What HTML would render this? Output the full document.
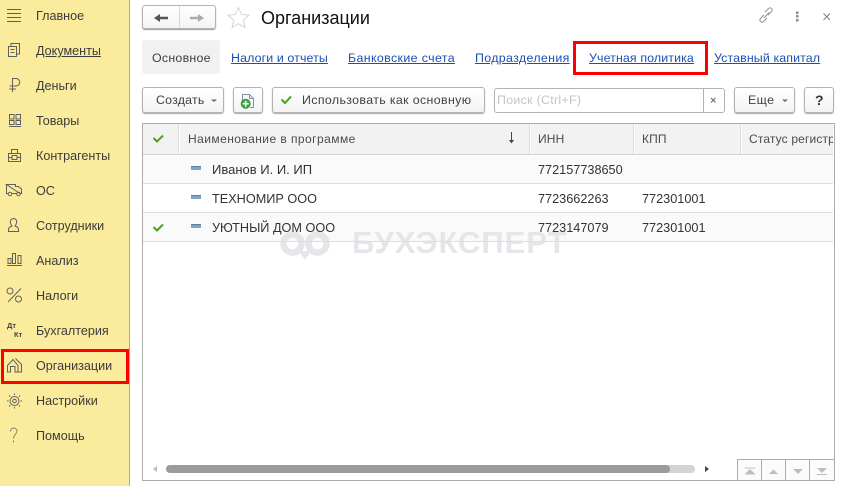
<!DOCTYPE html>
<html><head><meta charset="utf-8">
<style>
html,body{margin:0;padding:0;background:#fff}
#p{position:relative;width:841px;height:486px;overflow:hidden;background:#fff;font-family:"Liberation Sans",sans-serif;font-size:12px;color:#333}
.a{position:absolute}
.t{position:absolute;white-space:nowrap;line-height:16px;height:16px}
#side{left:0;top:0;width:129px;height:486px;background:#fbec9d;border-right:1px solid #b9ac6c}
.s{left:36px;font-size:12.6px;color:#3b3b3b}
.l{top:50px;font-size:12.4px;color:#1c4fb4;text-decoration:underline;letter-spacing:.12px}
.b{position:absolute;box-sizing:border-box;border:1px solid #b3b3b3;border-radius:3px;background:linear-gradient(#fff,#f4f4f4);box-shadow:0 1px 1px #aaa;height:26px;top:87px}
.bt{top:92px;font-size:12.4px;color:#404040;letter-spacing:.2px}
.h{top:131px;font-size:12px;color:#4a4a4a;letter-spacing:.15px}
.c{font-size:12.7px;color:#333}
.ln{position:absolute;background:#dedede;height:1px;left:143px;width:690px}
.sp{position:absolute;top:124px;width:2px;height:30px;background:#fff;border-left:1px solid #dcdcdc;box-sizing:border-box}
.ic{position:absolute;left:0;top:0}
.red{position:absolute;box-sizing:border-box;border:3px solid #f00}
</style></head><body><div id="p">
<div class="a" id="side"></div>
<svg class="ic" width="130" height="486" fill="none" stroke="#5f5f5f" stroke-width="1">
<path d="M7 9.500H21M7 13.500H21M7 17.500H21M7 21.500H21"/>
<path d="M8.500 46.500V56.500H16.500V46.500ZM11 46V43.500H19.500V54H17M10.500 49.500H14.500M10.500 52.500H14.500"/>
<path d="M12.500 92V78.500H16A3.700 3.700 0 0 1 16 86H9.500M9.500 89H16"/>
<path d="M9.500 114.500H14V119H9.500ZM16 114.500H20.500V119H16ZM9.500 120.500H14V124.500H9.500ZM16 120.500H20.500V124.500H16ZM9 126.500H21"/>
<path d="M8.500 153.500H20.500V161.500H8.500ZM11.500 153.500V149.500H17.500V153.500M8.500 157.500H12M17 157.500H20.500M12 155.500H17V159.500H12Z"/>
<path d="M6.500 185V193.500H8M12 193.500H17M20 193.500H21.500V189L18.500 186.500H15.500V184.500H6.500Z"/>
<circle cx="10" cy="194" r="1.800"/><circle cx="18.500" cy="194" r="1.800"/>
<path d="M8.500 231.500V229C9 227 11 226.500 12 226C10.500 224.500 10 221.500 10.500 220.500C11.500 218 15.500 218 16.500 220.500C17 221.500 16.500 224.500 15 226C16 226.500 18 227 18.500 229V231.500Z"/>
<path d="M8 258.500H11V263.500H8ZM12.500 253.500H15.500V263.500H12.500ZM18 255.500H21V263.500H18ZM7 265.500H22"/>
<path d="M8 302L21 288.500"/><circle cx="10" cy="291" r="3"/><circle cx="18.500" cy="299" r="3"/>
<path d="M7.500 372V365.500L13 359.500L18 365.500V372H15V366.500H10.500V372ZM15.500 358.500L21.500 364.500V372H18.500"/>
<circle cx="14.500" cy="401" r="4.500"/><circle cx="14.500" cy="401" r="1.800"/>
<path d="M14.500 395V393.500M14.500 408.500V407M8.500 401H7M22 401H20.500M10.200 396.700L9 395.500M20 406.500L18.800 405.300M18.800 396.700L20 395.500M9 406.500L10.200 405.300"/>
<path d="M10.500 431.500C10.500 429 12 428 13.500 428C15.500 428 17 429.500 17 431C17 434 13.500 434.500 13.500 438.500M13.500 440.500V442.500" stroke="#808080"/>
</svg>
<div class="t" style="left:7px;top:321px;font-size:7.5px;font-weight:bold;color:#444;line-height:10px;height:10px">Дт</div>
<div class="t" style="left:14px;top:330px;font-size:7.5px;font-weight:bold;color:#444;line-height:10px;height:10px">Кт</div>
<div class="t s" style="top:8px">Главное</div>
<div class="t s" style="top:43px;text-decoration:underline">Документы</div>
<div class="t s" style="top:78px">Деньги</div>
<div class="t s" style="top:113px">Товары</div>
<div class="t s" style="top:148px">Контрагенты</div>
<div class="t s" style="top:183px">ОС</div>
<div class="t s" style="top:218px">Сотрудники</div>
<div class="t s" style="top:253px">Анализ</div>
<div class="t s" style="top:288px">Налоги</div>
<div class="t s" style="top:323px">Бухгалтерия</div>
<div class="t s" style="top:358px">Организации</div>
<div class="t s" style="top:393px">Настройки</div>
<div class="t s" style="top:428px">Помощь</div>
<div class="red" style="left:1px;top:349px;width:128px;height:35px"></div>

<div class="b" style="left:142px;top:5px;width:74px;height:24px;box-shadow:0 1px 1px #999"></div>
<div class="a" style="left:179px;top:6px;width:1px;height:22px;background:#d8d8d8"></div>
<svg class="ic" width="260" height="36">
<path d="M158 18H168" stroke="#555" stroke-width="2.500"/><path d="M160 14V22L154 18Z" fill="#555"/>
<path d="M190 18H200" stroke="#aaa" stroke-width="2.500"/><path d="M198 14V22L204 18Z" fill="#aaa"/>
<path d="M238.500 7.500L241.500 14.500L249 15.200L243.300 20.200L245 27.500L238.500 23.700L232 27.500L233.700 20.200L228 15.200L235.500 14.500Z" fill="none" stroke="#d0d0d0" stroke-width=".9"/>
</svg>
<div class="t" style="left:261px;top:8px;height:20px;line-height:20px;font-size:18px;color:#111">Организации</div>
<svg class="ic" width="841" height="30" fill="none">
<path d="M764 15L760.500 18.500C758.500 20.500 761.500 23.500 763.500 21.500L767 18M768 15L771.500 11.500C773.500 9.500 770.500 6.500 768.500 8.500L765 12M764 18L769 12.500" stroke="#909090"/>
<path d="M796 11.500h2.500v2.500h-2.500zM796 15h2.500v2.500h-2.500zM796 19h2.500v2.500h-2.500z" fill="#8a8a8a"/>
<path d="M823.500 13.500L830 20M830 13.500L823.500 20" stroke="#808080"/>
</svg>

<div class="a" style="left:142px;top:40px;width:78px;height:34px;background:#f1f1f1;border-radius:3px"></div>
<div class="t" style="left:152px;top:50px;font-size:12.4px;color:#404040;letter-spacing:.25px">Основное</div>
<div class="t l" style="left:231px">Налоги и отчеты</div>
<div class="t l" style="left:348px;letter-spacing:.37px">Банковские счета</div>
<div class="t l" style="left:475px;letter-spacing:.35px">Подразделения</div>
<div class="t l" style="left:589px">Учетная политика</div>
<div class="t l" style="left:714px">Уставный капитал</div>
<div class="red" style="left:573px;top:41px;width:135px;height:34px"></div>

<div class="b" style="left:142px;width:82px"></div>
<div class="t bt" style="left:156px">Создать</div>
<div class="b" style="left:233px;width:30px"></div>
<div class="b" style="left:272px;width:213px"></div>
<div class="t bt" style="left:302px;letter-spacing:.36px">Использовать как основную</div>
<div class="a" style="left:494px;top:88px;width:231px;height:25px;box-sizing:border-box;border:1px solid #b3b3b3;border-radius:3px;background:#fff"></div>
<div class="a" style="left:703px;top:88px;width:1px;height:25px;background:#b3b3b3"></div>
<div class="t" style="left:497px;top:92px;font-size:12.4px;color:#c4c4c4;letter-spacing:.3px">Поиск (Ctrl+F)</div>
<div class="b" style="left:734px;width:61px"></div>
<div class="t bt" style="left:748px;letter-spacing:.4px">Еще</div>
<div class="b" style="left:804px;width:30px"></div>
<div class="t" style="left:815px;top:92px;font-size:14px;font-weight:bold;color:#333">?</div>
<svg class="ic" width="841" height="118" fill="none">
<path d="M211 99.500H217L214 102Z" fill="#666"/>
<path d="M782 99.500H788L785 102Z" fill="#666"/>
<path d="M242.500 101V94.500H249.500L253.500 98.500V107.500H250" stroke="#7d94a8" fill="#f7f9fb"/>
<path d="M249.500 94.500V98.500H253.500" stroke="#7d94a8"/>
<circle cx="245.700" cy="103.700" r="5" fill="#35a03c"/>
<path d="M242.700 103.700H248.700M245.700 100.700V106.700" stroke="#fff" stroke-width="1.600"/>
<path d="M281.500 99.500L285 103L291 96.500" stroke="#4c9f22" stroke-width="2"/>
<path d="M711 98L715.500 102.500M715.500 98L711 102.500" stroke="#666"/>
</svg>

<div class="a" style="left:142px;top:123px;width:693px;height:358px;box-sizing:border-box;border:1px solid #ababab;background:#fff"></div>
<div class="a" style="left:143px;top:124px;width:690px;height:30px;background:#f2f2f2"></div>
<div class="a" style="left:143px;top:155px;width:690px;height:28px;background:#fafafa"></div>
<div class="a" style="left:143px;top:213px;width:690px;height:28px;background:#fafafa"></div>

<svg class="ic" width="841" height="486" fill="none">
<g stroke="#e6e6ea" stroke-width="6.500">
<circle cx="292.500" cy="243.500" r="9"/><circle cx="317.500" cy="243.500" r="9"/>
</g>
<path d="M299 251H311L305 260Z" fill="#e6e6ea"/>
</svg>
<div class="t" style="left:352px;top:226px;height:34px;line-height:34px;font-size:31px;font-weight:bold;color:#e6e6ea;letter-spacing:.95px">БУХЭКСПЕРТ</div>

<div class="a" style="left:143px;top:154px;width:690px;height:1px;background:#d4d4d4"></div>
<div class="ln" style="top:183px"></div>
<div class="ln" style="top:212px"></div>
<div class="ln" style="top:241px"></div>
<div class="sp" style="left:178px"></div>
<div class="sp" style="left:529px"></div>
<div class="sp" style="left:633px"></div>
<div class="sp" style="left:740px"></div>

<div class="t h" style="left:188px;letter-spacing:.45px">Наименование в программе</div>
<div class="t h" style="left:538px">ИНН</div>
<div class="t h" style="left:642px">КПП</div>
<div class="t h" style="left:749px;width:84px;overflow:hidden">Статус регистрации</div>

<svg class="ic" width="841" height="240" fill="none">
<path d="M153.500 138L157 141.500L163 135.500" stroke="#4c9f22" stroke-width="2"/>
<path d="M153.500 227L157 230.500L163 224.500" stroke="#4c9f22" stroke-width="2"/>
<path d="M511.500 132V142" stroke="#444"/><path d="M509 140H514L511.500 143.500Z" fill="#444"/>
<rect x="191" y="166" width="10" height="4" fill="#7fa3c0"/><rect x="191" y="166" width="10" height="1" fill="#5b7f9c"/>
<rect x="191" y="195" width="10" height="4" fill="#7fa3c0"/><rect x="191" y="195" width="10" height="1" fill="#5b7f9c"/>
<rect x="191" y="224" width="10" height="4" fill="#7fa3c0"/><rect x="191" y="224" width="10" height="1" fill="#5b7f9c"/>
</svg>
<div class="t c" style="left:212px;top:162px;font-size:13px">Иванов И. И. ИП</div>
<div class="t c" style="left:212px;top:191px">ТЕХНОМИР ООО</div>
<div class="t c" style="left:212px;top:220px">УЮТНЫЙ ДОМ ООО</div>
<div class="t c" style="left:538px;top:162px">772157738650</div>
<div class="t c" style="left:538px;top:191px">7723662263</div>
<div class="t c" style="left:642px;top:191px">772301001</div>
<div class="t c" style="left:538px;top:220px">7723147079</div>
<div class="t c" style="left:642px;top:220px">772301001</div>

<div class="a" style="left:166px;top:465px;width:529px;height:8px;border-radius:4px;background:#d4d4d4"></div>
<div class="a" style="left:166px;top:465px;width:504px;height:8px;border-radius:4px;background:#9b9b9b"></div>
<div class="a" style="left:737px;top:459px;width:97px;height:21px;box-sizing:border-box;border-top:1px solid #ababab;border-left:1px solid #ababab;background:#fbfbfb"></div>
<svg class="ic" width="841" height="486">
<path d="M157 466V472L153 469Z" fill="#bbb"/>
<path d="M705 466V472L709 469Z" fill="#444"/>
<path d="M761.500 459V480M785.500 459V480M809.500 459V480" stroke="#ababab" fill="none"/>
<path d="M745 468H755" stroke="#bdbdbd" fill="none"/><path d="M750 469L755.500 474.500H744.500Z" fill="#bdbdbd"/>
<path d="M769 474L773.500 469.500L778 474Z" fill="#bdbdbd"/>
<path d="M793 469H803L798 474Z" fill="#bdbdbd"/>
<path d="M817 468H827L822 473Z" fill="#bdbdbd"/><path d="M817 474.500H827" stroke="#bdbdbd" fill="none"/>
</svg>
</div></body></html>
